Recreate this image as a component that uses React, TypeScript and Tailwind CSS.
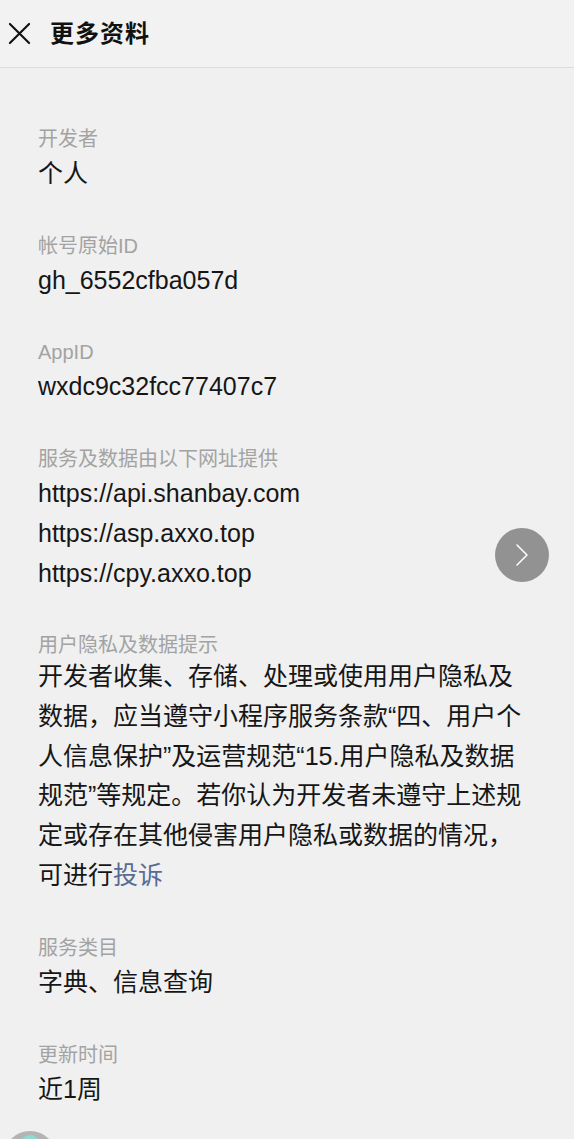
import React from "react";

const font = "font-['Liberation_Sans','Noto_Sans_CJK_SC',sans-serif]";

const Field = ({ label, children }: { label: string; children: React.ReactNode }) => (
  <div className="flex flex-col">
    <div className="text-[20px] leading-[28px] text-[#a3a3a3]">{label}</div>
    <div className="text-[25px] leading-[40px] text-[#161616]">{children}</div>
  </div>
);

export default function App() {
  return (
    <div className={`relative min-h-[1139px] w-full overflow-hidden bg-[#f0f0f0] ${font}`}>
      {/* header */}
      <div className="flex h-[68px] items-center border-b border-[#dcdcdc] bg-[#f2f2f2] pl-[8px]">
        <svg width="23" height="23" viewBox="0 0 24 24" fill="none" stroke="#111" strokeWidth="2.2" strokeLinecap="round">
          <path d="M2 2 L22 22 M22 2 L2 22" />
        </svg>
        <div className="ml-[19px] text-[24px] font-bold tracking-[1px] text-[#111]">更多资料</div>
      </div>

      <div className="flex flex-col gap-[38.5px] px-[38px] pt-[57px]">
        <Field label="开发者">个人</Field>
        <Field label="帐号原始ID">gh_6552cfba057d</Field>
        <Field label="AppID">wxdc9c32fcc77407c7</Field>
        <Field label="服务及数据由以下网址提供">
          <div>https://api.shanbay.com</div>
          <div>https://asp.axxo.top</div>
          <div>https://cpy.axxo.top</div>
        </Field>
        <Field label="用户隐私及数据提示">
          <p className="-mt-[2px] whitespace-nowrap leading-[39.8px]">
            开发者收集、存储、处理或使用用户隐私及
            <br />
            数据，应当遵守小程序服务条款“四、用户个
            <br />
            人信息保护”及运营规范“15.用户隐私及数据
            <br />
            规范”等规定。若你认为开发者未遵守上述规
            <br />
            定或存在其他侵害用户隐私或数据的情况，
            <br />
            可进行<span className="text-[#576b95]">投诉</span>
          </p>
        </Field>
        <Field label="服务类目">字典、信息查询</Field>
        <Field label="更新时间">近1周</Field>
      </div>

      {/* floating next button */}
      <div className="absolute left-[495px] top-[528px] flex h-[54px] w-[54px] items-center justify-center rounded-full bg-[#929292]">
        <svg width="14" height="24" viewBox="0 0 14 24" fill="none" stroke="#fff" strokeWidth="1.5" strokeLinecap="round" strokeLinejoin="round">
          <path d="M2 2 L12 12 L2 22" />
        </svg>
      </div>

      {/* partly hidden floating ball */}
      <div className="absolute left-[3px] top-[1131px] flex h-[54px] w-[54px] items-start justify-center rounded-full bg-[#b4b4b4] pt-[4px]">
        <div className="h-[20px] w-[20px] rounded-full bg-[#8fd9d0]" />
      </div>
    </div>
  );
}
